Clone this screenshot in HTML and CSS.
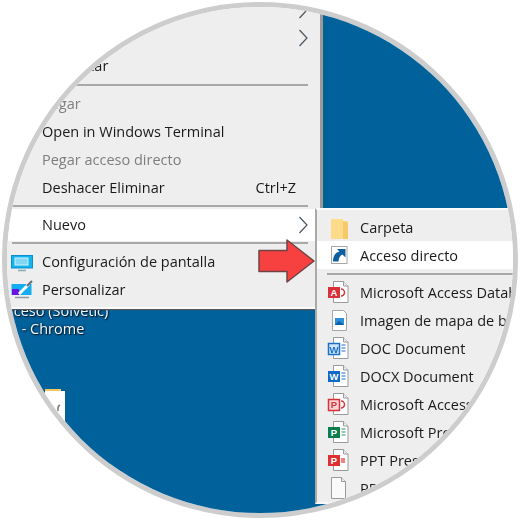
FILE: index.html
```html
<!DOCTYPE html>
<html lang="es">
<head>
<meta charset="utf-8">
<title>Nuevo acceso directo</title>
<link rel="stylesheet" href="styles.css">
</head>
<body>
<svg width="0" height="0" class="defs">
  <defs>
    <symbol id="page" viewBox="0 0 22 22"><path d="M6.500 .5h10l4.500 4.500v16.500h-14.500z" fill="#fff" stroke="#9a9a9a"/><path d="M16.500 .5v4.500h4.500" fill="#eee" stroke="#9a9a9a"/></symbol>
    <symbol id="chev" viewBox="0 0 10 18"><path d="M1.500 1l7.500 8-7.500 8" fill="none" stroke="#4a5560" stroke-width="1.200"/></symbol>
  </defs>
</svg>
<div class="lens">
  <div class="desktop">
    <div class="desk-label">Acceso (Solvetic)<br>- Chrome</div>
    <div class="desk-icon"><svg viewBox="0 0 22 40" width="22" height="40"><path d="M0 2h16v3H0z" fill="#f3c95f"/><path d="M0 4h20v36H0z" fill="#fff"/><path d="M15 18a3 5 0 0 0-2 6" fill="none" stroke="#777" stroke-width="1.500"/></svg></div>

    <div class="menu main-menu">
      <div class="row"><span class="label">Ordenar por</span><svg class="chev"><use href="#chev"/></svg></div>
      <div class="row"><span class="label">Ver</span><svg class="chev"><use href="#chev"/></svg></div>
      <div class="row"><span class="label">Actualizar</span></div>
      <div class="sep"></div>
      <div class="row off"><span class="label">Pegar</span></div>
      <div class="row"><span class="label">Open in Windows Terminal</span></div>
      <div class="row off"><span class="label">Pegar acceso directo</span></div>
      <div class="row"><span class="label">Deshacer Eliminar</span><span class="key">Ctrl+Z</span></div>
      <div class="sep before-hot"></div>
      <div class="row hot"><span class="label">Nuevo</span><svg class="chev"><use href="#chev"/></svg></div>
      <div class="sep after-hot"></div>
      <div class="row">
        <svg class="mon" viewBox="0 0 22 17"><rect x=".5" y=".5" width="21" height="12.500" fill="#11b4ee" stroke="#0a8fd0"/><rect x="4" y="3" width="13" height="7" fill="#7fd6f5" stroke="#d3f1fb"/><path d="M7 15.500h8" stroke="#8aa" stroke-width="1.500"/></svg>
        <span class="label">Configuración de pantalla</span>
      </div>
      <div class="row">
        <svg class="mon paint" viewBox="0 0 22 19"><rect x=".5" y="4" width="20" height="11" fill="#12aef0"/><rect x="1" y="9" width="7" height="6" fill="#6a12e0"/><path d="M8 14l10-10" stroke="#fff" stroke-width="3"/><path d="M16 6l5-5" stroke="#667" stroke-width="2"/><path d="M4 17.500h14" stroke="#89a" stroke-width="1.500"/></svg>
        <span class="label">Personalizar</span>
      </div>
    </div>

    <div class="menu sub-menu">
      <div class="row">
        <svg class="ico" viewBox="0 0 22 22"><path d="M4 3h12v2h5v18H4z" fill="#fddb88"/><path d="M16 5l5 2v16h-5z" fill="#f7c868"/></svg>
        <span class="label">Carpeta</span>
      </div>
      <div class="row hot">
        <svg class="ico" viewBox="0 0 22 22"><rect x="4.500" y="2.500" width="15.500" height="17" fill="#fff" stroke="#a8a8a8"/><path d="M10 5h8.500v8.500l-3-3c-2.500 1-4 4-4 7H6c0-5 2-9 6.500-10z" fill="#0f5f9f"/></svg>
        <span class="label">Acceso directo</span>
      </div>
      <div class="sep"></div>
      <div class="row">
        <svg class="ico" viewBox="0 0 22 22"><use href="#page" width="22" height="22"/><path d="M14 8a3.500 3.500 0 0 1 0 7" fill="none" stroke="#d9353a" stroke-width="1.500"/><rect x="1" y="6" width="12" height="11" fill="#d9303a"/><text x="7" y="15" class="glyph">A</text></svg>
        <span class="label">Microsoft Access Database</span>
      </div>
      <div class="row">
        <svg class="ico" viewBox="0 0 22 22"><path d="M5.500 1.500h11l3 3v17h-14z" fill="#fff" stroke="#a5a5a5"/><rect x="8" y="9" width="9" height="7" fill="#2c8fdc"/><path d="M8 16l4-4 5 4z" fill="#0a5fa8"/></svg>
        <span class="label">Imagen de mapa de bits</span>
      </div>
      <div class="row">
        <svg class="ico" viewBox="0 0 22 22"><use href="#page" width="22" height="22"/><path d="M14.500 8h4M14.500 11h4M14.500 14h4" stroke="#1a6fc9"/><rect x="1.500" y="6.500" width="11" height="11" fill="#cfe4f8" stroke="#1a6fc9" stroke-width="1.500"/><text x="7" y="15.500" class="glyph blue">W</text></svg>
        <span class="label">DOC Document</span>
      </div>
      <div class="row">
        <svg class="ico" viewBox="0 0 22 22"><use href="#page" width="22" height="22"/><path d="M14.500 8h4M14.500 11h4M14.500 14h4" stroke="#1a6fc9"/><rect x="1" y="6" width="12" height="11" fill="#1068c8"/><text x="7" y="15" class="glyph">W</text></svg>
        <span class="label">DOCX Document</span>
      </div>
      <div class="row">
        <svg class="ico" viewBox="0 0 22 22"><use href="#page" width="22" height="22"/><path d="M14 8a3.500 3.500 0 0 1 0 7" fill="none" stroke="#d9353a" stroke-width="1.500"/><rect x="1.500" y="6.500" width="11" height="11" fill="#f9d5d5" stroke="#d9303a" stroke-width="1.500"/><text x="7" y="15" class="glyph red">P</text></svg>
        <span class="label">Microsoft Access Project</span>
      </div>
      <div class="row">
        <svg class="ico" viewBox="0 0 22 22"><use href="#page" width="22" height="22"/><path d="M14.500 8h4M14.500 11h4M14.500 14h4" stroke="#1f9a68"/><rect x="1" y="6" width="12" height="11" fill="#0d7d4b"/><text x="7" y="15" class="glyph">P</text></svg>
        <span class="label">Microsoft Project</span>
      </div>
      <div class="row">
        <svg class="ico" viewBox="0 0 22 22"><use href="#page" width="22" height="22"/><path d="M14 9h4v5h-4z" fill="#f08080"/><rect x="1" y="6" width="12" height="11" fill="#dc3132"/><text x="7" y="15" class="glyph">P</text></svg>
        <span class="label">PPT Presentation</span>
      </div>
      <div class="row">
        <svg class="ico" viewBox="0 0 22 22"><path d="M4.500 .5h10l4 4v17h-14z" fill="#fafafa" stroke="#9a9a9a"/><path d="M14.500 .5v4h4" fill="#eee" stroke="#9a9a9a"/></svg>
        <span class="label">PPTX Presentation</span>
      </div>
    </div>

    <svg class="arrow" viewBox="0 0 58 46" width="58" height="46"><path d="M1 12.500h28V2l27 21-27 21V33.500H1z" fill="#f74141" stroke="#6e4444" stroke-width="1.500" stroke-linejoin="round"/></svg>
  </div>
</div>
</body>
</html>
```
FILE: styles.css
```css
* { box-sizing: border-box; }
html, body { margin: 0; padding: 0; background: #fff; }
body { width: 520px; height: 520px; overflow: hidden; font-family: "Open Sans", "Noto Sans", sans-serif; }
.defs { display: block; height: 0; }
.lens {
  width: 516px;
  height: 516px;
  margin: 2px 0 0 2px;
  border: 5px solid #cdcdcd;
  border-radius: 50%;
  overflow: hidden;
  background: #fff;
}
.desktop {
  position: relative;
  width: 506px;
  height: 506px;
  background: #00619b;
  filter: blur(.35px);
}
.desk-label {
  position: absolute;
  left: -31px;
  top: 295px;
  width: 154px;
  text-align: center;
  font-size: 14.500px;
  line-height: 18px;
  color: #f4f8fb;
  white-space: nowrap;
  text-shadow: 0 0 3px #001c33, 1px 1px 1px #001c33;
}
.desk-icon { position: absolute; left: 38px; top: 380px; display: flex; }
.menu {
  position: absolute;
  background: #eeeeee;
  color: #1a1a1a;
  font-size: 14.500px;
}
.main-menu {
  left: -107px;
  top: -11px;
  width: 423px;
  padding: 0 12px 3px 0;
  border-right: 3px solid #9a9a9a;
  border-bottom: 2px solid #fbfbfb;
  box-shadow: 0 1px 1px #555;
}
.sub-menu {
  left: 308px;
  top: 201px;
  width: 300px;
  padding-top: 3px;
  border: 2px solid #f8f8f8;
  border-left: 2px solid #a9a9a9;
  border-top-color: #fbfbfb;
}
.row {
  display: flex;
  align-items: center;
  height: 28px;
  white-space: nowrap;
}
.main-menu .row { padding-left: 142px; position: relative; }
.main-menu .label, .main-menu .key { padding-bottom: 2px; }
.sub-menu .row { padding-left: 10px; gap: 11px; }
.row.off { color: #7e7e7e; }
.row.hot { background: #fff; }
.main-menu .row.hot { height: 32px; margin-right: -12px; padding-right: 12px; }
.label { flex: none; }
.key { margin-left: auto; padding-right: 12px; }
.chev { width: 10px; height: 18px; margin-left: auto; }
.sep { height: 2px; background: #a8a8a8; }
.main-menu .sep { margin: 4px 0 4px 112px; }
.main-menu .sep.before-hot { margin-top: 3px; margin-bottom: 2px; }
.main-menu .sep.after-hot { margin-top: 1px; margin-bottom: 4px; }
.sub-menu .sep { margin: 4px 0 3px 10px; }
.mon {
  position: absolute;
  left: 111px;
  top: 7px;
  width: 22px;
  height: 17px;
}
.mon.paint { top: 4px; height: 19px; }
.ico { width: 22px; height: 22px; flex: none; overflow: visible; }
.glyph {
  font-family: "Liberation Sans", sans-serif;
  font-size: 9.500px;
  font-weight: 700;
  fill: #fff;
  text-anchor: middle;
}
.glyph.blue { fill: #1a6fc9; }
.glyph.red { fill: #d9303a; }
.arrow { position: absolute; left: 251px; top: 231px; }
```
